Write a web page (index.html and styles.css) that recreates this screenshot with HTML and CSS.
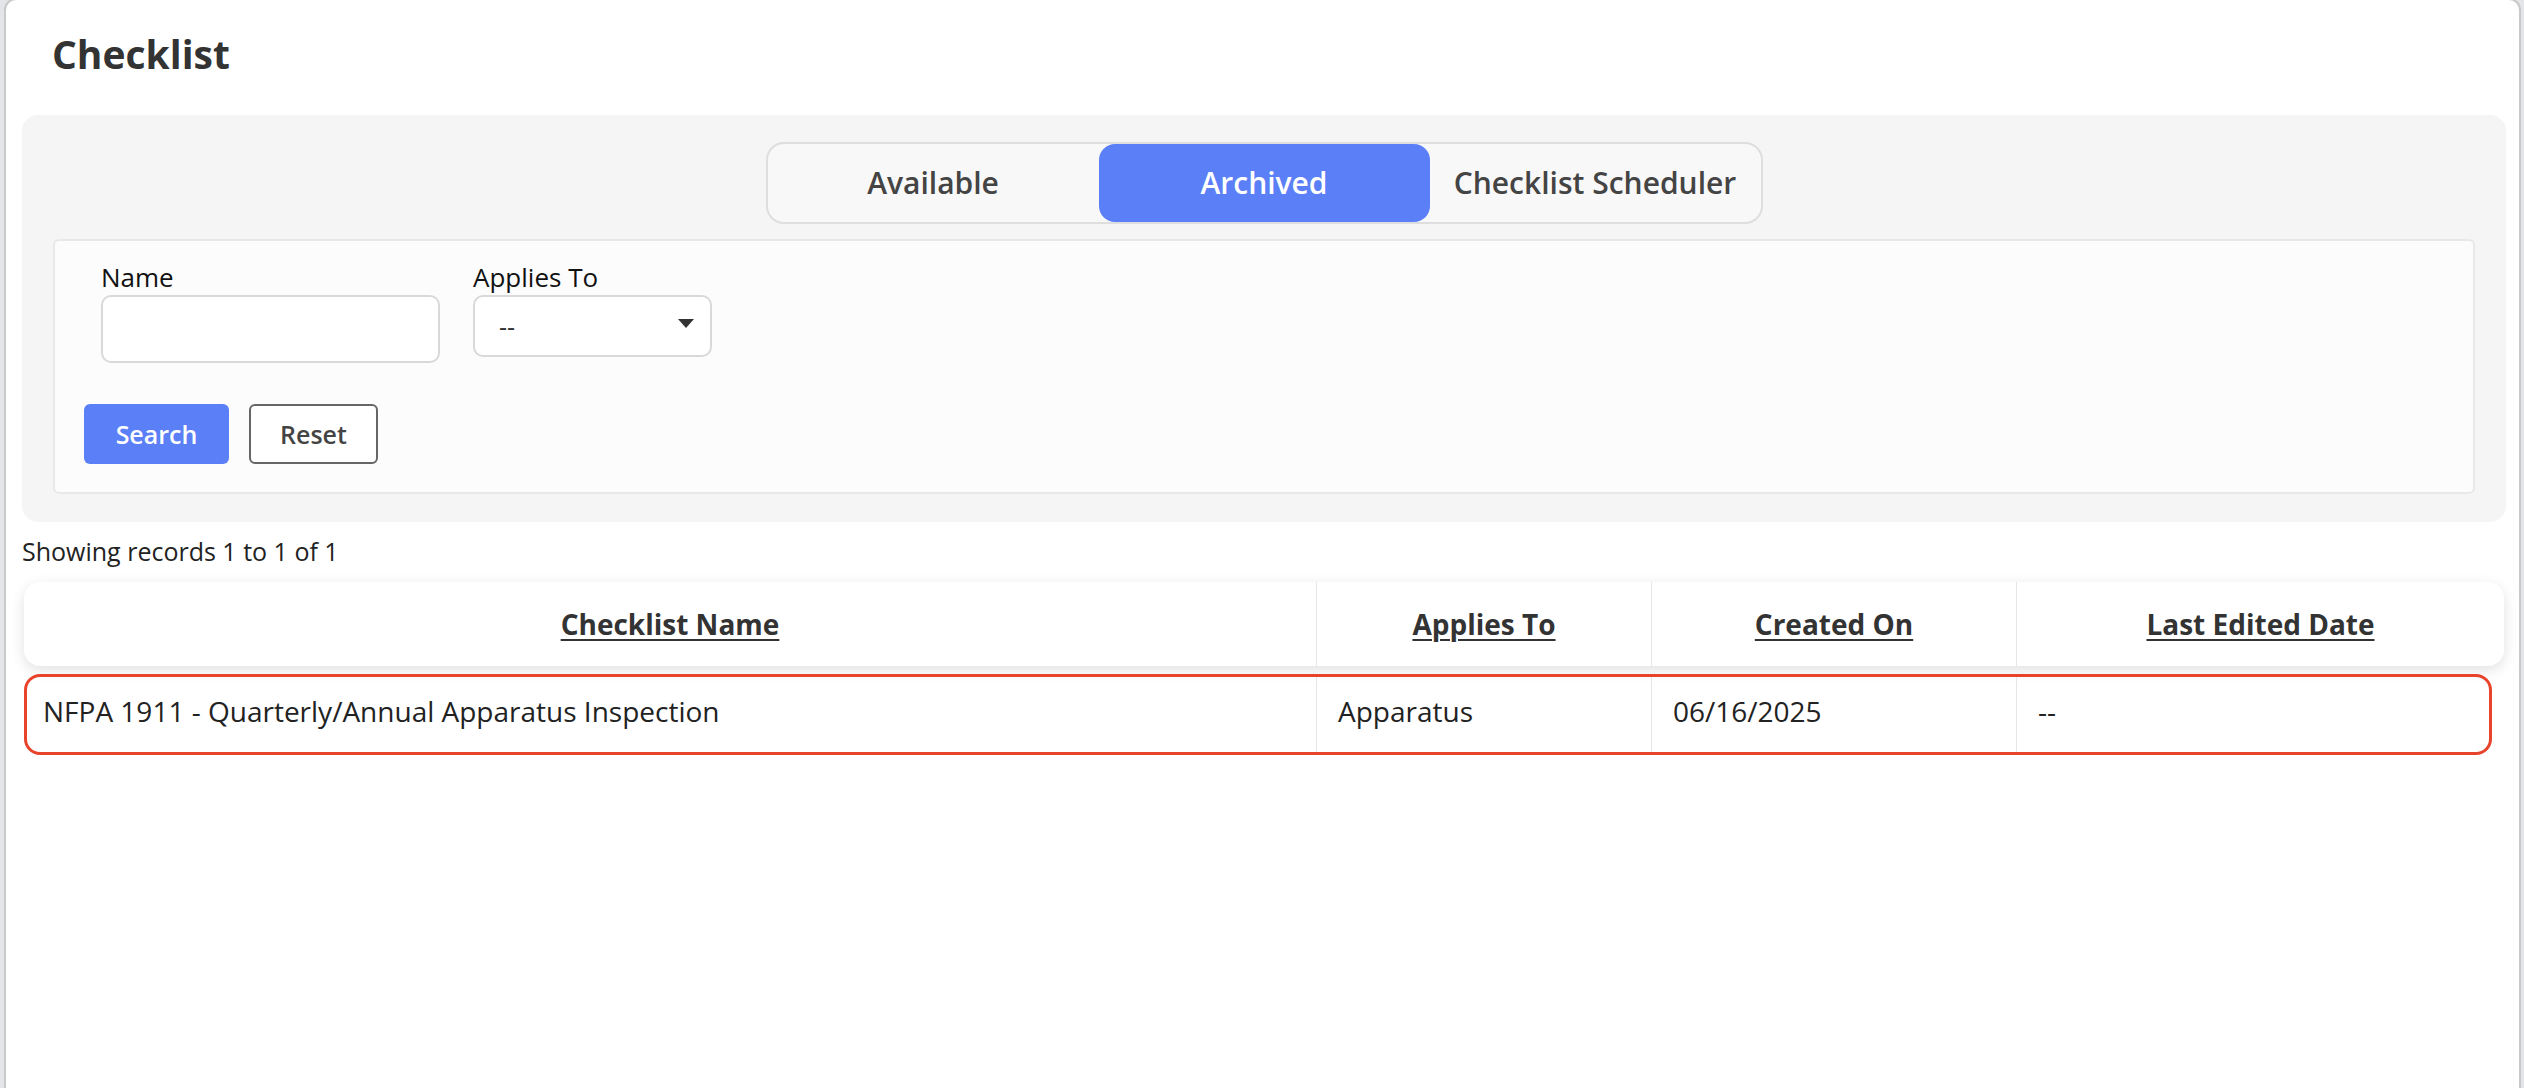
FILE: index.html
```html
<!DOCTYPE html>
<html>
<head>
    <title>Checklist</title>
    <link rel="stylesheet" href="styles.css">
</head>
<body>
    <div class="page">
        <h1 class="page-title">Checklist</h1>

        <!-- Filter panel with tabs -->
        <div class="filter-panel">
            <div class="tabs">
                <div class="tab">Available</div>
                <div class="tab active">Archived</div>
                <div class="tab">Checklist Scheduler</div>
            </div>

            <div class="filter-box">
                <div class="fields">
                    <div class="field">
                        <label class="field-label">Name</label>
                        <input type="text" class="text-input">
                    </div>
                    <div class="field">
                        <label class="field-label">Applies To</label>
                        <div class="select-box">
                            <span>--</span>
                            <span class="caret"></span>
                        </div>
                    </div>
                </div>
                <div class="actions">
                    <button class="btn btn-primary">Search</button>
                    <button class="btn btn-outline">Reset</button>
                </div>
            </div>
        </div>

        <!-- Results -->
        <p class="records-info">Showing records 1 to 1 of 1</p>

        <div class="results">
            <div class="table-head">
                <div class="th"><span>Checklist Name</span></div>
                <div class="th"><span>Applies To</span></div>
                <div class="th"><span>Created On</span></div>
                <div class="th"><span>Last Edited Date</span></div>
            </div>
            <div class="table-row">
                <div class="td">NFPA 1911 - Quarterly/Annual Apparatus Inspection</div>
                <div class="td">Apparatus</div>
                <div class="td">06/16/2025</div>
                <div class="td">--</div>
            </div>
        </div>
    </div>
</body>
</html>
```

FILE: styles.css
```css
/* Base page */
body {
    margin: 0;
    background: #e4e5e8;
    font-family: "Open Sans", "Liberation Sans", sans-serif;
    color: #222;
}

.page {
    margin: -2px 3px 0 4px;
    min-height: 1090px;
    background: #fff;
    border: 2px solid #c9c9c9;
    border-bottom: none;
    border-radius: 12px 12px 0 0;
    padding: 0 13px 0 16px;
}

.page-title {
    margin: 0;
    padding: 30px 0 0 30px;
    font-size: 39px;
    line-height: 48px;
    font-weight: 700;
    color: #333;
}

/* Filter panel */
.filter-panel {
    margin-top: 37px;
    background: #f5f5f5;
    border-radius: 16px;
    padding: 27px 31px 28px 31px;
}

.tabs {
    display: flex;
    width: 993px;
    margin: 0 auto;
    border: 2px solid #dedede;
    border-radius: 18px;
    background: #f8f8f8;
}

.tab {
    flex: 1;
    height: 78px;
    line-height: 78px;
    text-align: center;
    font-size: 30px;
    font-weight: 600;
    color: #444;
    border-radius: 16px;
}

.tab.active {
    background: #5b7ff7;
    color: #fff;
}

.filter-box {
    margin-top: 15px;
    background: #fcfcfc;
    border: 2px solid #e8e8e8;
    border-radius: 6px;
    padding: 19px 29px 28px 29px;
}

.fields {
    display: flex;
    gap: 33px;
    padding-left: 17px;
    align-items: flex-start;
}

.field-label {
    display: block;
    font-size: 26px;
    line-height: 34px;
    color: #111;
}

.text-input {
    box-sizing: border-box;
    width: 339px;
    height: 68px;
    margin: 1px 0 0 0;
    border: 2px solid #d9d9d9;
    border-radius: 10px;
    background: #fff;
}

.select-box {
    box-sizing: border-box;
    width: 239px;
    height: 62px;
    margin-top: 1px;
    border: 2px solid #d9d9d9;
    border-radius: 10px;
    background: #fff;
    display: flex;
    align-items: center;
    justify-content: space-between;
    padding: 0 16px 0 24px;
    font-size: 25px;
    color: #333;
}

.caret {
    width: 0;
    height: 0;
    border-left: 8px solid transparent;
    border-right: 8px solid transparent;
    border-top: 9px solid #333;
    margin-top: -6px;
}

.actions {
    display: flex;
    gap: 20px;
    margin-top: 41px;
}

.btn {
    box-sizing: border-box;
    height: 60px;
    font-family: inherit;
    font-size: 25px;
    font-weight: 600;
    border-radius: 6px;
    cursor: pointer;
}

.btn-primary {
    width: 145px;
    background: #5b7ff7;
    border: none;
    color: #fff;
}

.btn-outline {
    width: 129px;
    background: #fff;
    border: 2px solid #666;
    color: #444;
}

/* Results table */
.records-info {
    margin: 12px 0 0 0;
    font-size: 25px;
    line-height: 34px;
    color: #222;
}

.results {
    margin: 14px 2px 0 2px;
}

.table-head {
    display: grid;
    grid-template-columns: 1292px 335px 365px 1fr;
    height: 84px;
    background: #fff;
    border-radius: 16px;
    box-shadow: 0 4px 14px rgba(0, 0, 0, 0.12);
}

.th {
    display: flex;
    align-items: center;
    justify-content: center;
    font-size: 28px;
    font-weight: 700;
    color: #333;
}

.th + .th {
    border-left: 1px solid #e6e6e6;
}

.th span {
    text-decoration: underline;
    text-decoration-thickness: 2px;
    text-underline-offset: 4px;
}

.table-row {
    display: grid;
    grid-template-columns: 1289px 335px 365px 1fr;
    box-sizing: border-box;
    height: 81px;
    margin: 8px 12px 0 0;
    border: 3px solid #e8432b;
    border-radius: 16px;
}

.td {
    display: flex;
    align-items: center;
    padding: 0 21px 8px 21px;
    font-size: 28px;
    color: #222;
}

.td:first-child {
    padding-left: 16px;
}

.td + .td {
    border-left: 1px solid #e6e6e6;
}
```
